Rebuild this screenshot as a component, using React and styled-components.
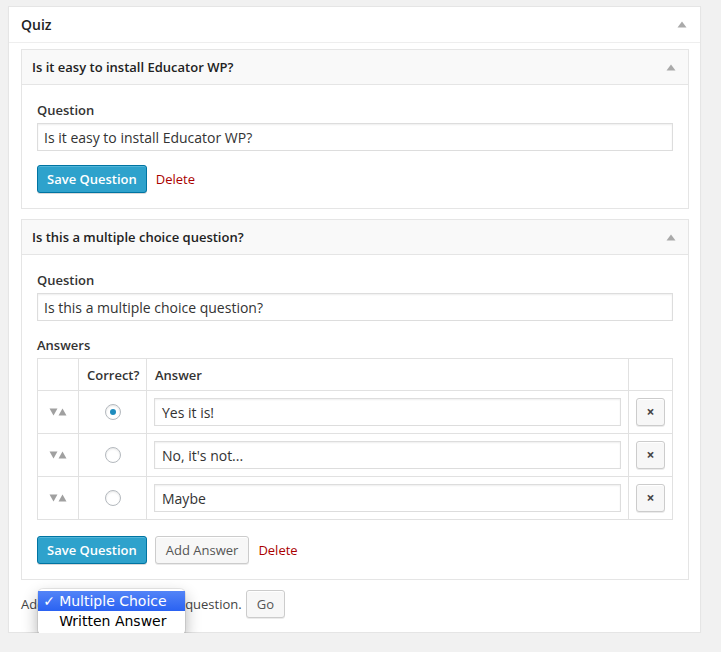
import React from 'react';
import styled, { createGlobalStyle } from 'styled-components';

const GlobalStyle = createGlobalStyle`
  body {
    margin: 0;
    background: #f1f1f1;
    font-family: "Open Sans", "Liberation Sans", sans-serif;
    font-size: 13px;
    color: #444;
  }
`;

const questions = [
  { id: 1, title: 'Is it easy to install Educator WP?', answers: null },
  {
    id: 2,
    title: 'Is this a multiple choice question?',
    answers: [
      { text: 'Yes it is!', correct: true },
      { text: "No, it's not...", correct: false },
      { text: 'Maybe', correct: false },
    ],
  },
];

const ToggleArrow = () => (
  <svg width="10" height="7" viewBox="0 0 10 7">
    <path d="M5 0.5 L9.5 6.5 L0.5 6.5 Z" fill="#aaa" />
  </svg>
);

const SortHandle = () => (
  <svg width="18" height="8" viewBox="0 0 18 8">
    <path d="M0.5 0.5 L8.5 0.5 L4.5 7.5 Z" fill="#a0a0a0" />
    <path d="M9.5 7.5 L17.5 7.5 L13.5 0.5 Z" fill="#a0a0a0" />
  </svg>
);

const QuestionPanel = ({ q }) => (
  <Panel>
    <PanelHeader>
      <PanelTitle>{q.title}</PanelTitle>
      <ToggleArrow />
    </PanelHeader>
    <PanelBody>
      <Field>
        <Label>Question</Label>
        <TextInput>{q.title}</TextInput>
      </Field>
      {q.answers && (
        <Field $gap={16}>
          <Label>Answers</Label>
          <AnswerTable>
            <thead>
              <tr>
                <Th $w={41}></Th>
                <Th $w={68}>Correct?</Th>
                <Th>Answer</Th>
                <Th $w={44}></Th>
              </tr>
            </thead>
            <tbody>
              {q.answers.map((a, i) => (
                <tr key={i}>
                  <Td $center><SortHandle /></Td>
                  <Td $center><Radio $checked={a.correct} /></Td>
                  <Td><AnswerInput>{a.text}</AnswerInput></Td>
                  <Td $center><RemoveButton>×</RemoveButton></Td>
                </tr>
              ))}
            </tbody>
          </AnswerTable>
        </Field>
      )}
      <Actions>
        <PrimaryButton>Save Question</PrimaryButton>
        {q.answers && <Button>Add Answer</Button>}
        <DeleteLink>Delete</DeleteLink>
      </Actions>
    </PanelBody>
  </Panel>
);

const App = () => (
  <>
    <GlobalStyle />
    <Postbox>
      <BoxHeader>
        <BoxTitle>Quiz</BoxTitle>
        <ToggleArrow />
      </BoxHeader>
      <BoxInside>
        {questions.map((q) => <QuestionPanel key={q.id} q={q} />)}
        <AddRow>
          <span>Add</span>
          <SelectWrap>
            <FakeSelect>Multiple Choice</FakeSelect>
            <Menu>
              <MenuItem $active><Check>✓</Check>Multiple Choice</MenuItem>
              <MenuItem><Check></Check>Written Answer</MenuItem>
            </Menu>
          </SelectWrap>
          <span>question.</span>
          <Button>Go</Button>
        </AddRow>
      </BoxInside>
    </Postbox>
  </>
);

const Postbox = styled.div`
  margin: 6px 0 0 8px;
  width: 691px;
  background: #fff;
  border: 1px solid #e5e5e5;
  box-shadow: 0 1px 1px rgba(0, 0, 0, 0.04);
`;

const BoxHeader = styled.div`
  display: flex;
  align-items: center;
  justify-content: space-between;
  height: 35px;
  padding: 0 13px 0 12px;
  border-bottom: 1px solid #eee;
`;

const BoxTitle = styled.h3`
  margin: 0;
  font-size: 14px;
  font-weight: 600;
  color: #222;
`;

const BoxInside = styled.div`
  padding: 6px 11px 14px 12px;
`;

const Panel = styled.div`
  border: 1px solid #e5e5e5;
  margin-bottom: 10px;
`;

const PanelHeader = styled.div`
  display: flex;
  align-items: center;
  justify-content: space-between;
  height: 34px;
  padding: 0 12px 0 10px;
  background: #f9f9f9;
  border-bottom: 1px solid #e5e5e5;
`;

const PanelTitle = styled.h4`
  margin: 0;
  font-size: 13px;
  font-weight: 600;
  color: #222;
`;

const PanelBody = styled.div`
  padding: 15px;
`;

const Field = styled.div`
  margin-bottom: ${(p) => p.$gap || 14}px;
`;

const Label = styled.div`
  font-weight: 600;
  line-height: 20px;
  color: #333;
  margin-bottom: 3px;
`;

const TextInput = styled.div`
  box-sizing: border-box;
  height: 28px;
  border: 1px solid #ddd;
  box-shadow: inset 0 1px 2px rgba(0, 0, 0, 0.07);
  padding: 0 6px;
  display: flex;
  align-items: center;
  font-size: 14px;
  color: #333;
`;

const AnswerTable = styled.table`
  width: 100%;
  border-collapse: collapse;
  border: 1px solid #e1e1e1;
  table-layout: fixed;
`;

const Th = styled.th`
  box-sizing: border-box;
  ${(p) => (p.$w ? `width: ${p.$w}px;` : '')}
  height: 32px;
  padding: 0 8px;
  text-align: left;
  font-weight: 600;
  color: #333;
  border: 1px solid #e1e1e1;
`;

const Td = styled.td`
  height: 42px;
  padding: 0 7px 0 7px;
  border: 1px solid #e1e1e1;
  text-align: ${(p) => (p.$center ? 'center' : 'left')};
  vertical-align: middle;
  line-height: 0;
`;

const AnswerInput = styled(TextInput)`
  height: 28px;
  line-height: normal;
  padding: 0 7px;
`;

const Radio = styled.span`
  display: inline-block;
  box-sizing: border-box;
  width: 16px;
  height: 16px;
  border: 1px solid #b4b9be;
  border-radius: 50%;
  box-shadow: inset 0 1px 2px rgba(0, 0, 0, 0.1);
  position: relative;
  &::after {
    content: '';
    display: ${(p) => (p.$checked ? 'block' : 'none')};
    position: absolute;
    left: 4px;
    top: 4px;
    width: 6px;
    height: 6px;
    border-radius: 50%;
    background: #1e8cbe;
  }
`;

const Button = styled.span`
  display: inline-flex;
  align-items: center;
  box-sizing: border-box;
  height: 28px;
  padding: 0 10px;
  background: #f7f7f7;
  border: 1px solid #ccc;
  border-radius: 3px;
  box-shadow: inset 0 1px 0 #fff, 0 1px 0 rgba(0, 0, 0, 0.08);
  color: #555;
  font-size: 13px;
  line-height: 1;
`;

const RemoveButton = styled(Button)`
  width: 29px;
  justify-content: center;
  padding: 0;
  font-weight: 700;
  color: #444;
  font-size: 14px;
`;

const PrimaryButton = styled(Button)`
  padding: 0 9px;
  background: #2ea2cc;
  border-color: #0074a2;
  color: #fff;
  font-weight: 600;
  box-shadow: inset 0 1px 0 rgba(120, 200, 230, 0.5), 0 1px 0 rgba(0, 0, 0, 0.15);
`;

const Actions = styled.div`
  display: flex;
  align-items: center;
  gap: 8px;
`;

const DeleteLink = styled.span`
  color: #a00;
  margin-left: 1px;
`;

const AddRow = styled.div`
  display: flex;
  align-items: center;
  gap: 4px;
  margin-top: 10px;
  color: #444;
`;

const SelectWrap = styled.span`
  position: relative;
  display: inline-block;
`;

const FakeSelect = styled.span`
  display: inline-flex;
  align-items: center;
  box-sizing: border-box;
  width: 132px;
  height: 22px;
  padding: 0 6px;
  border: 1px solid #ccc;
  border-radius: 4px;
  background: #fff;
`;

const Menu = styled.div`
  position: absolute;
  left: -11px;
  top: -4px;
  width: 147px;
  padding: 2px 0 4px;
  background: #fff;
  border-radius: 5px;
  box-shadow: 0 0 0 1px rgba(0, 0, 0, 0.08), 0 7px 16px rgba(0, 0, 0, 0.32);
  font-family: "DejaVu Sans", "Liberation Sans", sans-serif;
  font-size: 14px;
`;

const MenuItem = styled.div`
  display: flex;
  align-items: center;
  height: 20px;
  padding-left: 5px;
  color: ${(p) => (p.$active ? '#fff' : '#000')};
  background: ${(p) => (p.$active ? 'linear-gradient(#5384f7, #2a62f2)' : 'transparent')};
`;

const Check = styled.span`
  display: inline-block;
  width: 16px;
`;

export default App;
